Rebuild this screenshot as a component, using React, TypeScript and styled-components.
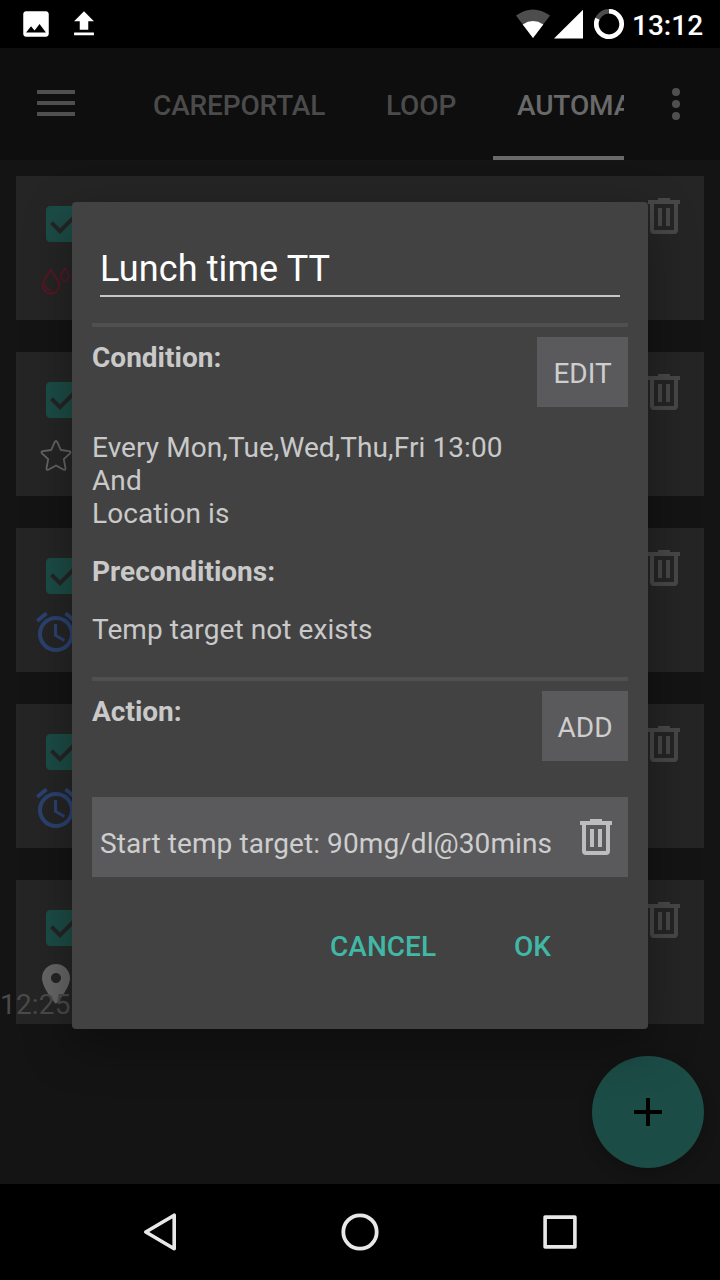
import React from "react";
import styled, { createGlobalStyle } from "styled-components";

const GlobalStyle = createGlobalStyle`
  * { box-sizing: border-box; }
  html, body { margin: 0; padding: 0; background: #000; }
  body { font-family: Roboto, "Liberation Sans", sans-serif; font-size: 28px; line-height: 33px; }
  svg { display: block; flex: none; }
`;

const Screen = styled.div`
  position: relative;
  width: 720px;
  height: 1280px;
  display: flex;
  flex-direction: column;
  overflow: hidden;
  background: #141414;
`;

const StatusBar = styled.header`
  flex: none;
  height: 48px;
  background: #000;
  color: #fff;
  display: flex;
  align-items: center;
  justify-content: space-between;
  padding: 0 19px;
`;

const StatusGroup = styled.div<{ $gap: number }>`
  display: flex;
  align-items: center;
  gap: ${(p) => p.$gap}px;
`;

const Clock = styled.span`
  font-weight: 500;
  width: 73px;
  padding-left: 4px;
  margin-top: 3px;
  white-space: nowrap;
`;

const AppBar = styled.nav`
  flex: none;
  height: 112px;
  background: #0e0e0e;
  color: #4b4b4b;
  display: flex;
`;

const BarButton = styled.button<{ $width: number }>`
  width: ${(p) => p.$width}px;
  height: 112px;
  flex: none;
  border: 0;
  padding: 0;
  background: none;
  color: inherit;
  display: flex;
  align-items: center;
  justify-content: center;
`;

const Tabs = styled.div`
  width: 512px;
  flex: none;
  overflow: hidden;
  display: flex;
  padding-left: 17px;
`;

const Tab = styled.div<{ $width: number; $active?: boolean }>`
  flex: none;
  width: ${(p) => p.$width}px;
  height: 112px;
  padding: 41px 0 0 24px;
  font-weight: 500;
  letter-spacing: -0.14px;
  white-space: nowrap;
  color: ${(p) => (p.$active ? "#696969" : "#4b4b4b")};
  border-bottom: 4px solid ${(p) => (p.$active ? "#696969" : "transparent")};
`;

const EventList = styled.main`
  flex: 1;
  padding: 16px;
  display: flex;
  flex-direction: column;
  gap: 32px;
`;

const EventCard = styled.article`
  height: 144px;
  flex: none;
  background: #252525;
  display: flex;
  justify-content: space-between;
  padding: 22px 24px 0 16px;
`;

const CardMarks = styled.div`
  display: flex;
  flex-direction: column;
  gap: 8px;
  padding-top: 2px;

  & > :first-child { margin-left: 8px; }
`;

const NavBar = styled.footer`
  flex: none;
  height: 96px;
  background: #000;
  display: flex;
  align-items: center;
  justify-content: center;
  gap: 152px;
`;

const Timestamp = styled.span`
  position: absolute;
  left: 0;
  top: 988px;
  letter-spacing: 0.2px;
  color: #4a4a4a;
`;

const Fab = styled.button`
  position: absolute;
  right: 16px;
  bottom: 112px;
  width: 112px;
  height: 112px;
  border: 0;
  padding: 0;
  border-radius: 50%;
  background: #1c4c46;
  box-shadow: 0 6px 14px rgba(0, 0, 0, 0.22);
  display: flex;
  align-items: center;
  justify-content: center;
`;

const Dialog = styled.section`
  position: absolute;
  left: 72px;
  top: 202px;
  width: 576px;
  height: 827px;
  padding: 38px 20px 0;
  border-radius: 4px;
  background: #424242;
  color: #c9c9c9;
  box-shadow: 0 16px 48px rgba(0, 0, 0, 0.36);
  display: flex;
  flex-direction: column;
`;

const TitleInput = styled.input`
  flex: none;
  height: 57px;
  margin: 0 8px 26px;
  padding: 3px 0 0;
  border: 0;
  border-bottom: 2px solid #c6c7c7;
  outline: 0;
  background: none;
  color: #fff;
  font: 400 36px/42px Roboto, "Liberation Sans", sans-serif;
  letter-spacing: 0.12px;
`;

const Divider = styled.div`
  flex: none;
  height: 4px;
  background: #505050;
`;

const SectionHead = styled.div`
  flex: none;
  display: flex;
  align-items: flex-start;
  justify-content: space-between;
  padding-top: 10px;
`;

const Heading = styled.h2<{ $offset?: number }>`
  margin: ${(p) => p.$offset ?? 0}px 0 0;
  font-size: 28px;
  line-height: 33px;
  font-weight: 700;
`;

const FlatButton = styled.button<{ $width: number }>`
  width: ${(p) => p.$width}px;
  height: 70px;
  border: 0;
  padding: 3px 0 0;
  background: #5a5a5c;
  color: #cecece;
  font: 400 28px/33px Roboto, "Liberation Sans", sans-serif;
`;

const Rules = styled.div`
  flex: none;
  height: 270px;
  padding-top: 24px;
  display: flex;
  flex-direction: column;
  gap: 25px;
`;

const RuleText = styled.p`
  margin: 0;
  white-space: pre-line;
  letter-spacing: 0.08px;
`;

const ActionRow = styled.div`
  flex: none;
  height: 80px;
  margin-top: 36px;
  padding: 22px 16px 0 8px;
  background: #5a5a5c;
  color: #cecece;
  display: flex;
  justify-content: space-between;
`;

const ActionText = styled.span`
  padding-top: 8px;
  white-space: nowrap;
  letter-spacing: 0.08px;
`;

const DialogActions = styled.div`
  display: flex;
  justify-content: flex-end;
  gap: 78px;
  padding: 53px 77px 0 0;
`;

const TextButton = styled.button`
  border: 0;
  padding: 0;
  background: none;
  color: #41b8a6;
  font: 500 28px/33px Roboto, "Liberation Sans", sans-serif;
`;

const TrashIcon = ({ color }: { color: string }) => (
  <svg width="32" height="36" viewBox="0 0 32 36" fill={color}>
    <path d="M10 0h12v2h10v4h-2v26a4 4 0 0 1-4 4H6a4 4 0 0 1-4-4V6H0V2h10zM6 6v26h20V6z" fillRule="evenodd" />
    <path d="M10 10h4v18h-4zM18 10h4v18h-4z" />
  </svg>
);

const CheckIcon = () => (
  <svg width="48" height="48" viewBox="0 0 24 24" fill="#1c4c46">
    <path d="M19 3H5c-1.11 0-2 .9-2 2v14c0 1.1.89 2 2 2h14c1.11 0 2-.9 2-2V5c0-1.1-.89-2-2-2zm-9 14l-5-5 1.41-1.41L10 14.17l7.59-7.59L19 8l-9 9z" />
  </svg>
);

const DropsIcon = () => (
  <svg width="48" height="48" viewBox="0 0 48 48" fill="none" stroke="#5d1526" strokeWidth="1.8" strokeLinejoin="round" strokeLinecap="round">
    <path d="M18.8 13.5C16.8 18.2 10.6 23.8 10.6 29.2a8.3 8.3 0 0 0 16.6 0C27.2 23.8 20.8 18.2 18.8 13.5z" />
    <path d="M13.4 29c.2 3 2 4.8 4.8 4.9" />
    <path d="M32.8 12.3c-.9 2.5-4 5.3-4 8.1a4 4 0 0 0 8 0c0-2.8-3.1-5.6-4-8.1z" strokeWidth="1.5" />
  </svg>
);

const StarIcon = () => (
  <svg width="48" height="48" viewBox="0 0 48 48" fill="none" stroke="#666" strokeWidth="1.8" strokeLinejoin="round">
    <path d="M22.7 10.2q1.3-2.4 2.6 0L28.8 18L37 19.1q2.6.6.8 2.5L31.8 27.2L33.5 36.1q.1 2.4-2.2 1.4L24 33.5L16.7 37.5q-2.3 1-2.2-1.4L16.2 27.2L10.2 21.6q-1.8-1.9.8-2.5L19.2 18z" />
  </svg>
);

const AlarmIcon = () => (
  <svg width="48" height="48" viewBox="0 0 24 24" fill="#2b4270">
    <path d="M22 5.72l-4.6-3.86-1.29 1.53 4.6 3.86L22 5.72zM7.88 3.39L6.6 1.86 2 5.71l1.29 1.53 4.59-3.85zM12.5 8H11v6l4.75 2.85.75-1.23-4-2.37V8zM12 4c-4.97 0-9 4.03-9 9s4.02 9 9 9c4.97 0 9-4.03 9-9s-4.03-9-9-9zm0 16c-3.87 0-7-3.13-7-7s3.13-7 7-7 7 3.13 7 7-3.13 7-7 7z" />
  </svg>
);

const PinIcon = () => (
  <svg width="48" height="48" viewBox="0 0 24 24" fill="#666">
    <path d="M12 2C8.13 2 5 5.13 5 9c0 5.25 7 13 7 13s7-7.75 7-13c0-3.87-3.13-7-7-7zm0 9.5c-1.38 0-2.5-1.12-2.5-2.5s1.12-2.5 2.5-2.5 2.5 1.12 2.5 2.5-1.12 2.5-2.5 2.5z" />
  </svg>
);

const events = [DropsIcon, StarIcon, AlarmIcon, AlarmIcon, PinIcon];

export default function App() {
  return (
    <Screen>
      <GlobalStyle />
      <StatusBar>
        <StatusGroup $gap={14}>
          <svg width="34" height="34" viewBox="0 0 24 24" fill="#fff">
            <path d="M21 19V5c0-1.1-.9-2-2-2H5c-1.1 0-2 .9-2 2v14c0 1.1.9 2 2 2h14c1.1 0 2-.9 2-2zM8.5 13.5l2.5 3.01L14.5 12l4.5 6H5l3.5-4.5z" />
          </svg>
          <svg width="34" height="34" viewBox="0 0 24 24" fill="#fff">
            <path d="M9 16h6v-6h4l-7-7-7 7h4zm-4 2h14v2H5z" />
          </svg>
        </StatusGroup>
        <StatusGroup $gap={4}>
          <svg width="34" height="30" viewBox="0 0 34 30">
            <path d="M0 6.5Q17-5.5 34 6.5L17 29z" fill="#4d4d4d" />
            <path d="M6.7 15.4Q17 8.6 27.3 15.4L17 29z" fill="#fff" />
          </svg>
          <svg width="36" height="30" viewBox="0 0 36 30">
            <path d="M0 29.5L29 .8V29.5z" fill="#fff" />
          </svg>
          <svg width="30" height="30" viewBox="0 0 30 30" fill="none" strokeWidth="4.6">
            <circle cx="15" cy="15" r="12.7" stroke="#4d4d4d" />
            <path d="M15 2.3A12.7 12.7 0 1 1 3.4 9.8" stroke="#fff" />
          </svg>
          <Clock>13:12</Clock>
        </StatusGroup>
      </StatusBar>

      <AppBar>
        <BarButton $width={112} aria-label="Menu">
          <svg width="38" height="28" viewBox="0 0 38 28" fill="#4f4f4f">
            <path d="M0 0h38v4H0zM0 11h38v4H0zM0 22h38v4H0z" />
          </svg>
        </BarButton>
        <Tabs>
          <Tab $width={233}>CAREPORTAL</Tab>
          <Tab $width={131}>LOOP</Tab>
          <Tab $width={216} $active>AUTOMATION</Tab>
        </Tabs>
        <BarButton $width={104} aria-label="More options">
          <svg width="8" height="32" viewBox="0 0 8 32" fill="#4f4f4f">
            <circle cx="4" cy="4" r="4" />
            <circle cx="4" cy="16" r="4" />
            <circle cx="4" cy="28" r="4" />
          </svg>
        </BarButton>
      </AppBar>

      <EventList>
        {events.map((Mark, i) => (
          <EventCard key={i}>
            <CardMarks>
              <CheckIcon />
              <Mark />
            </CardMarks>
            <TrashIcon color="#484848" />
          </EventCard>
        ))}
      </EventList>

      <NavBar>
        <svg width="48" height="48" viewBox="0 0 48 48" fill="none" stroke="#e8e8e8" strokeWidth="3.6" strokeLinejoin="round">
          <path d="M9.8 24L38.2 7.2V40.8z" />
        </svg>
        <svg width="48" height="48" viewBox="0 0 48 48" fill="none" stroke="#e8e8e8" strokeWidth="3.8">
          <circle cx="24" cy="24" r="16.7" />
        </svg>
        <svg width="48" height="48" viewBox="0 0 48 48" fill="none" stroke="#e8e8e8" strokeWidth="3.6" strokeLinejoin="round">
          <path d="M9.1 9.1h29.8v29.8H9.1z" />
        </svg>
      </NavBar>

      <Timestamp>12:25</Timestamp>
      <Fab aria-label="Add event">
        <svg width="28" height="28" viewBox="0 0 28 28" fill="#000">
          <path d="M12 0h4v12h12v4H16v12h-4V16H0v-4h12z" />
        </svg>
      </Fab>

      <Dialog>
        <TitleInput defaultValue="Lunch time TT" />
        <Divider />
        <SectionHead>
          <Heading $offset={4}>Condition:</Heading>
          <FlatButton $width={91}>EDIT</FlatButton>
        </SectionHead>
        <Rules>
          <RuleText>{"Every Mon,Tue,Wed,Thu,Fri 13:00\nAnd\nLocation is"}</RuleText>
          <Heading>Preconditions:</Heading>
          <RuleText>Temp target not exists</RuleText>
        </Rules>
        <Divider />
        <SectionHead>
          <Heading $offset={4}>Action:</Heading>
          <FlatButton $width={86}>ADD</FlatButton>
        </SectionHead>
        <ActionRow>
          <ActionText>Start temp target: 90mg/dl@30mins</ActionText>
          <TrashIcon color="#bdbdbd" />
        </ActionRow>
        <DialogActions>
          <TextButton>CANCEL</TextButton>
          <TextButton>OK</TextButton>
        </DialogActions>
      </Dialog>
    </Screen>
  );
}
